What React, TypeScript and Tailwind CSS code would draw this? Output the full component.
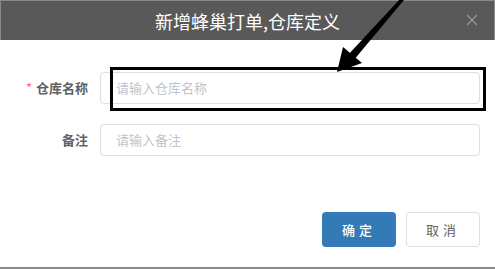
import React from "react";

const font = { fontFamily: '"Noto Sans CJK SC", "Noto Sans", sans-serif' };

export default function App() {
  return (
    <div
      className="relative w-[495px] h-[269px] overflow-hidden bg-white"
      style={font}
    >
      <div className="relative flex h-[40px] items-center justify-center border-l border-t border-r border-[#8a8a8a] bg-[#595959]">
        <span className="text-[18px] leading-none text-white">新增蜂巢打单,仓库定义</span>
        <span className="absolute right-[16px] top-[13px] text-[#9a9a9a]">
          <svg width="12" height="12" viewBox="0 0 12 12">
            <path d="M1 1L11 11M11 1L1 11" stroke="#9a9a9a" strokeWidth="1.2" />
          </svg>
        </span>
      </div>

      <div className="flex flex-col gap-[20px] pt-[32px]">
        <div className="flex items-center">
          <label className="flex w-[88px] justify-end text-[13px] font-bold text-[#606266]">
            <span className="mr-[4px] text-[#f56c6c] font-normal">*</span>仓库名称
          </label>
          <div className="ml-[12px] flex h-[32px] w-[380px] items-center rounded-[4px] border border-[#dcdfe6] px-[15px] text-[13px] text-[#c0c4cc]">
            请输入仓库名称
          </div>
        </div>
        <div className="flex items-center">
          <label className="flex w-[88px] justify-end text-[13px] font-bold text-[#606266]">
            备注
          </label>
          <div className="ml-[12px] flex h-[32px] w-[380px] items-center rounded-[4px] border border-[#dcdfe6] px-[15px] text-[13px] text-[#c0c4cc]">
            请输入备注
          </div>
        </div>
      </div>

      <div className="mt-[56px] flex justify-end gap-[10px] pr-[15px]">
        <button className="flex h-[35px] w-[74px] items-center justify-center rounded-[4px] bg-[#337ab7] text-[13px] font-medium tracking-[4px] text-white">
          确定
        </button>
        <button className="flex h-[35px] w-[74px] items-center justify-center rounded-[4px] border border-[#dcdfe6] bg-white text-[13px] tracking-[4px] text-[#606266]">
          取消
        </button>
      </div>

      <div className="absolute bottom-0 left-0 h-[2px] w-full bg-[#8a8a8a]" />

      <div className="absolute left-[110px] top-[67px] h-[44px] w-[376px] border-[3px] border-black" />

      <svg className="absolute left-0 top-0" width="495" height="269">
        <polygon points="401,-2 404,0 353,61 347,56" fill="black" />
        <polygon points="337,72 343,47 362,63" fill="black" />
      </svg>
    </div>
  );
}
